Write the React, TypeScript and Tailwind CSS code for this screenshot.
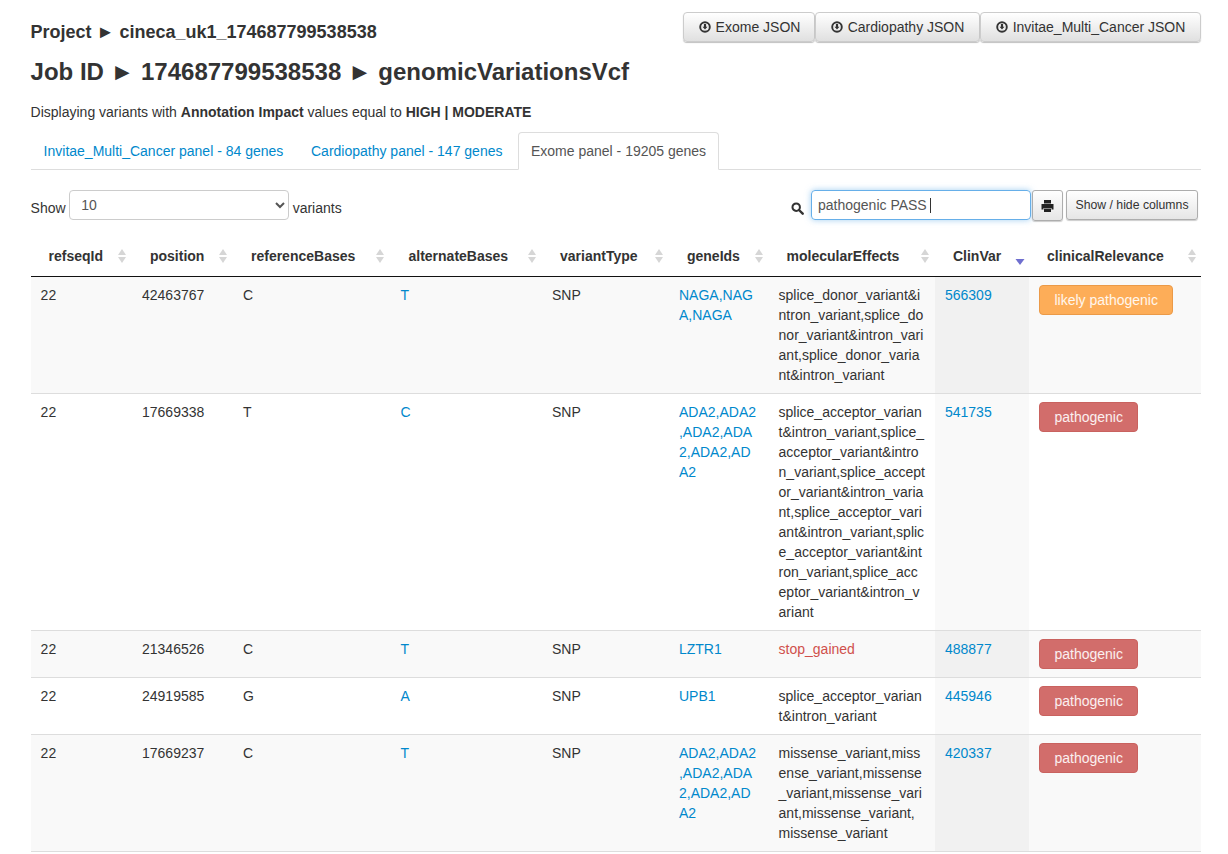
const FONT = "[font-family:'Liberation_Sans',Arial,sans-serif]";

type Row = {
  position: string;
  ref: string;
  alt: string;
  genes: string[];
  effects: string;
  effectsRed?: boolean;
  clinVar: string;
  relevance: "likely pathogenic" | "pathogenic";
};

const rows: Row[] = [
  {
    position: "42463767",
    ref: "C",
    alt: "T",
    genes: ["NAGA", "NAGA", "NAGA"],
    effects: "splice_donor_variant&intron_variant,splice_donor_variant&intron_variant,splice_donor_variant&intron_variant",
    clinVar: "566309",
    relevance: "likely pathogenic",
  },
  {
    position: "17669338",
    ref: "T",
    alt: "C",
    genes: ["ADA2", "ADA2", "ADA2", "ADA2", "ADA2", "ADA2"],
    effects:
      "splice_acceptor_variant&intron_variant,splice_acceptor_variant&intron_variant,splice_acceptor_variant&intron_variant,splice_acceptor_variant&intron_variant,splice_acceptor_variant&intron_variant,splice_acceptor_variant&intron_variant",
    clinVar: "541735",
    relevance: "pathogenic",
  },
  {
    position: "21346526",
    ref: "C",
    alt: "T",
    genes: ["LZTR1"],
    effects: "stop_gained",
    effectsRed: true,
    clinVar: "488877",
    relevance: "pathogenic",
  },
  {
    position: "24919585",
    ref: "G",
    alt: "A",
    genes: ["UPB1"],
    effects: "splice_acceptor_variant&intron_variant",
    clinVar: "445946",
    relevance: "pathogenic",
  },
  {
    position: "17669237",
    ref: "C",
    alt: "T",
    genes: ["ADA2", "ADA2", "ADA2", "ADA2", "ADA2", "ADA2"],
    effects: "missense_variant,missense_variant,missense_variant,missense_variant,missense_variant,missense_variant",
    clinVar: "420337",
    relevance: "pathogenic",
  },
];

const columns = [
  { name: "refseqId", width: "w-[101.4px]", pad: "pr-[5px]" },
  { name: "position", width: "w-[101px]", pad: "pr-[5px]" },
  { name: "referenceBases", width: "w-[157.5px]", pad: "pr-[5px]" },
  { name: "alternateBases", width: "w-[151.5px]", pad: "pr-[5px]" },
  { name: "variantType", width: "w-[127px]", pad: "pr-[5px]" },
  { name: "geneIds", width: "w-[99.6px]", pad: "pr-[5px]" },
  { name: "molecularEffects", width: "w-[166.4px]", pad: "pr-[5px]" },
  { name: "ClinVar", width: "w-[94px]", pad: "pr-[4px]" },
  { name: "clinicalRelevance", width: "w-[172px]", pad: "pr-[4px]" },
];

const DownloadIcon = () => (
  <svg width="12" height="12" viewBox="0 0 12 12" className="shrink-0">
    <circle cx="6" cy="6" r="4.8" fill="none" stroke="#333" strokeWidth="1.9" />
    <path d="M4.9 2.9h2.2v2.9h1.4L6 8.6 3.5 5.8h1.4z" fill="#333" />
  </svg>
);

const SortIcon = ({ active }: { active?: boolean }) =>
  active ? (
    <svg width="10" height="16" viewBox="0 0 10 16" className="mt-[5px] shrink-0">
      <path d="M0.5 9h9L5 15z" fill="#6f6fcf" />
    </svg>
  ) : (
    <svg width="10" height="16" viewBox="0 0 10 16" className="shrink-0">
      <path d="M5 1l4 6H1z" fill="#d6d6d6" />
      <path d="M1 9h8l-4 6z" fill="#d6d6d6" />
    </svg>
  );

const JsonButton = ({ label, width }: { label: string; width: string }) => (
  <button
    className={`${width} flex h-[30px] items-center justify-center gap-[5px] rounded-[4px] border border-[#ccc] bg-gradient-to-b from-white to-[#e0e0e0] text-[14px] text-[#333] shadow-[0_1px_1px_rgba(0,0,0,0.25)]`}
  >
    <DownloadIcon />
    {label}
  </button>
);

const App = () => {
  return (
    <div className={`${FONT} min-h-[854px] overflow-hidden bg-white pr-[27px] pl-[30.6px] text-[14px] leading-5 text-[#333]`}>
      <div className="flex items-start justify-between pt-3">
        <h2 className="pt-[10px] text-[18px] leading-5 font-bold">Project ► cineca_uk1_174687799538538</h2>
        <div className="flex">
          <JsonButton label="Exome JSON" width="w-[132px] pl-px" />
          <JsonButton label="Cardiopathy JSON" width="w-[165px]" />
          <JsonButton label="Invitae_Multi_Cancer JSON" width="w-[221px]" />
        </div>
      </div>
      <h1 className="mt-[15px] text-[24px] leading-[30px] font-bold">Job ID ► 174687799538538 ► genomicVariationsVcf</h1>
      <p className="mt-[15px]">
        Displaying variants with <b>Annotation Impact</b> values equal to <b>HIGH | MODERATE</b>
      </p>

      <ul className="mt-[10px] flex h-[38px] gap-[2px] border-b border-[#ddd]">
        <li className="w-[265.4px] py-[9px] pl-[13px] text-[#0088cc]">Invitae_Multi_Cancer panel - 84 genes</li>
        <li className="w-[218px] py-[9px] pl-[13px] text-[#0088cc]">Cardiopathy panel - 147 genes</li>
        <li className="h-[38px] w-[201px] rounded-t-[4px] border border-[#ddd] border-b-white bg-white py-[8px] pl-[12px] text-[#555]">
          Exome panel - 19205 genes
        </li>
      </ul>

      <div className="mt-[20px] flex h-[31px] items-start">
        <label className="flex items-center">
          <span className="mt-[8px] self-start">Show</span>
          <select
            defaultValue="10"
            className="mx-[3.5px] h-[30px] w-[220px] rounded-[4px] border border-[#ccc] bg-white pr-[8px] pl-[7px] text-[14px] text-[#555]"
          >
            <option value="10">10</option>
            <option value="25">25</option>
            <option value="50">50</option>
          </select>
          <span className="mt-[8px] self-start">variants</span>
        </label>
        <div className="mr-[3px] ml-auto flex items-start">
          <svg width="13" height="13" viewBox="0 0 14 14" className="mt-[12px] mr-[7px]">
            <circle cx="5.6" cy="5.6" r="4" fill="none" stroke="#333" strokeWidth="2.2" />
            <path d="M8.6 8.6l4 4" stroke="#333" strokeWidth="2.6" strokeLinecap="round" />
          </svg>
          <div className="flex h-[30px] w-[220px] items-center rounded-[4px] border border-[#66afe9] pl-[6px] text-[14px] text-[#555] shadow-[0_0_6px_rgba(102,175,233,0.6)]">
            pathogenic PASS
            <span className="ml-[3px] h-[15px] w-px bg-[#333]" />
          </div>
          <button className="ml-px flex h-[31px] w-[31px] items-center justify-center rounded-[3px] border border-[#adadad] bg-gradient-to-b from-white to-[#e6e6e6] shadow-[0_1px_1px_rgba(0,0,0,0.2)]">
            <svg width="13" height="12" viewBox="0 0 13 12">
              <path d="M3 0h7v3.5H3z" fill="#222" />
              <path d="M0.5 4h12v5.5h-2V8h-8v1.5h-2z" fill="#222" />
              <path d="M3 8.5h7V12H3z" fill="#222" />
            </svg>
          </button>
          <button className="ml-[3px] h-[30px] w-[132px] rounded-[3px] border border-[#adadad] bg-gradient-to-b from-white to-[#e6e6e6] text-[12.25px] text-[#333] shadow-[0_1px_1px_rgba(0,0,0,0.2)]">
            Show / hide columns
          </button>
        </div>
      </div>

      <table className="mt-[15px] w-[1170.4px] table-fixed border-collapse">
        <colgroup>
          {columns.map((c) => (
            <col key={c.name} className={c.width} />
          ))}
        </colgroup>
        <thead>
          <tr className="border-b border-[#111]">
            {columns.map((c) => (
              <th key={c.name} className={`h-[40px] pl-[18px] text-left font-bold ${c.pad}`}>
                <div className="flex items-center justify-between">
                  {c.name}
                  <SortIcon active={c.name === "ClinVar"} />
                </div>
              </th>
            ))}
          </tr>
        </thead>
        <tbody>
          {rows.map((r, i) => (
            <tr key={r.clinVar} className={`border-b border-[#ddd] align-top ${i % 2 === 0 ? "bg-[#f9f9f9]" : "bg-white"}`}>
              <td className="px-[10px] py-[8px]">22</td>
              <td className="px-[10px] py-[8px]">{r.position}</td>
              <td className="px-[10px] py-[8px]">{r.ref}</td>
              <td className="px-[10px] py-[8px] text-[#0088cc]">{r.alt}</td>
              <td className="px-[10px] py-[8px]">SNP</td>
              {/* zero width space so a line may start with the comma */}
              <td className="px-[10px] py-[8px] break-all text-[#0088cc]">{r.genes.join("\u200B,")}</td>
              <td className={`px-[10px] py-[8px] break-all ${r.effectsRed ? "text-[#d0504c]" : ""}`}>{r.effects}</td>
              <td className={`px-[10px] py-[8px] text-[#0088cc] ${i % 2 === 0 ? "bg-[#f1f1f1]" : "bg-[#f9f9f9]"}`}>{r.clinVar}</td>
              <td className="px-[10px] py-[8px]">
                <span
                  className={`block h-[30px] w-fit rounded-[4px] border px-[14.5px] text-[14px] leading-[28px] text-white/90 ${
                    r.relevance === "pathogenic" ? "border-[#c9625f] bg-[#d26d6b]" : "border-[#eb9a48] bg-[#fdad58]"
                  }`}
                >
                  {r.relevance}
                </span>
              </td>
            </tr>
          ))}
        </tbody>
      </table>
    </div>
  );
};

export default App;
